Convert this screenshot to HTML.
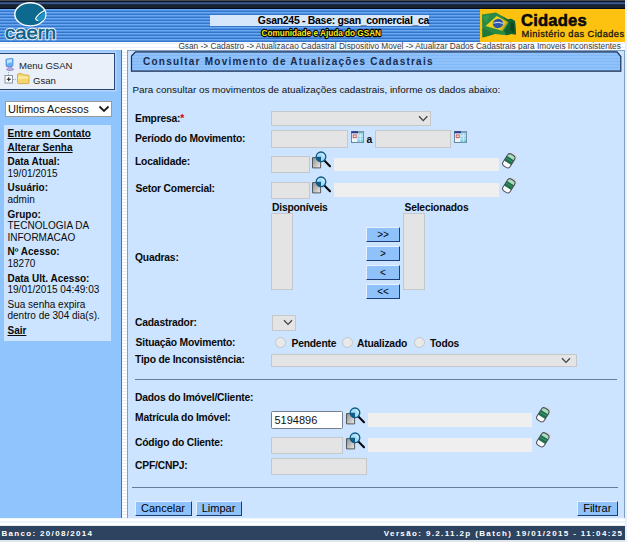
<!DOCTYPE html>
<html>
<head>
<meta charset="utf-8">
<title>GSAN</title>
<style>
*{box-sizing:border-box;margin:0;padding:0}
html,body{width:627px;height:542px;overflow:hidden;background:#fff;font-family:"Liberation Sans",sans-serif;font-size:11px;color:#111}
.abs{position:absolute}
#hdr{left:0;top:0;width:627px;height:41.6px;background:repeating-linear-gradient(to bottom,#69a8f2 0,#69a8f2 1px,#4f8fe0 1px,#4f8fe0 2px,#3474c9 2px,#3474c9 3px);}
#hdrtop{left:0;top:0;width:627px;height:9px;background:linear-gradient(to bottom,#4a4c50 0,#4a4c50 1px,#0a1428 1px,#0a1428 2px,#2d4a78 2px,#2d4a78 3px,#3a5a8c 3px,#3a5a8c 4px,#1c2c44 4px,#1c2c44 5px,#18222f 5px,#18222f 8px,#020c24 8px,#020c24 9px)}
#subhdr{left:0;top:41.6px;width:627px;height:9px;background:linear-gradient(to bottom,#fff 0,#e6effb 1.4px,#fff 2.5px,#fff 4.5px,#e8f0fb 5.5px,#fff 6.5px,#fff 9px)}
#side{left:0;top:50.4px;width:122px;height:468px;background:#90c4fc;border-right:1px solid #4674ae}
#dots{left:122px;top:50.4px;width:4.5px;height:468.4px;background:repeating-linear-gradient(to bottom,#fff 0,#fff 2px,#e3ecf7 2px,#e3ecf7 3px)}
#main{left:126.5px;top:50.4px;width:498.5px;height:468.6px;background:#cce4ff;border:1px solid #7f9fc4}
#foot{left:0;top:526.4px;width:625.6px;height:14px;background:#2e4360}
.ft{color:#fff;font-weight:bold;font-size:8px;letter-spacing:1.37px;line-height:14px;white-space:nowrap}
.b{font-weight:bold}
.t{white-space:nowrap;line-height:12px}
.inp{background:#e4e4e4;border:1px solid #c4c8cc}
.ro{background:#efefef}
.btn{background:#8fc2fb;border:1px solid;border-color:#e6f1ff #1e3c78 #1e3c78 #e6f1ff;font-size:11px;text-align:center;line-height:13.5px;color:#000}

.sb{left:7.5px;font-size:10px;line-height:12px;white-space:nowrap;color:#0a0a0a}
.u{text-decoration:underline}

.lb{left:135px;font-size:10.3px;letter-spacing:-0.2px;font-weight:bold;line-height:12px;white-space:nowrap;color:#0a0a0a}
.qb{left:366px;width:34px;height:15.5px;font-size:10px;line-height:13px}
.rd{width:11px;height:11px;border-radius:50%;background:#e9e9e9;border:1px solid #c2c6ca}
</style>
</head>
<body>
<div class="abs" id="hdr"></div>
<div class="abs" id="hdrtop"></div>
<div class="abs" id="subhdr"></div>

<!-- header content -->
<svg class="abs" style="left:0;top:0" width="70" height="44" viewBox="0 0 70 44">
  <ellipse cx="30.3" cy="14.3" rx="15.5" ry="11.6" fill="#0d6a8e" stroke="#fff" stroke-width="1.4"/>
  <path d="M45 11.5 Q46.2 15.5 44.2 19.3 Q41 22.6 36.8 20.4 Q35.2 19.5 36 18.2 Z" fill="#1f8fc4"/>
  <path d="M44.6 10.6 Q38 14 35.6 18.6 Q36 20.4 38.2 20.6" fill="none" stroke="#fff" stroke-width="1.1"/>
  <text x="5" y="38.8" font-family="Liberation Sans, sans-serif" font-size="18.6" fill="#f2f7fd" stroke="#f2f7fd" stroke-width="2.3" stroke-linejoin="round" textLength="51" lengthAdjust="spacingAndGlyphs">caern</text>
  <text x="5" y="38.8" font-family="Liberation Sans, sans-serif" font-size="18.6" fill="#0d5f88" stroke="#0d5f88" stroke-width="0.5" textLength="51" lengthAdjust="spacingAndGlyphs">caern</text>
</svg>
<div class="abs" style="left:210px;top:15px;width:219px;height:11px;background:#d6e7fc"></div>
<div class="abs t b" id="ttl" style="left:257.8px;top:14px;font-size:10.5px;letter-spacing:-0.31px;line-height:13px;color:#000">Gsan245 - Base: gsan_comercial_ca</div>
<svg class="abs" style="left:250px;top:25px" width="140" height="16" viewBox="0 0 140 16">
  <text x="11.5" y="11" font-family="Liberation Sans, sans-serif" font-size="9.5" font-weight="bold" fill="#ffe81a" stroke="#000" stroke-width="2.4" stroke-linejoin="round" paint-order="stroke" textLength="119.5" lengthAdjust="spacingAndGlyphs">Comunidade e Ajuda do GSAN</text>
</svg>
<div class="abs" style="left:479.7px;top:9px;width:146px;height:32.6px;background:#fdc20f"></div><div class="abs" style="left:625.3px;top:0;width:2px;height:542px;background:#e9f0f9;z-index:5"></div>
<svg class="abs" style="left:480px;top:10px" width="40" height="30" viewBox="0 0 40 30">
  <path d="M2 4.5 L9 3.6 L16 2.6 L22 6 L28 9.4 L31 8.8 L35 11 L35.5 17 L36 24.6 L31 24 L26.5 25.2 L20 24.4 L14.5 24 L8 26 L2.5 27.6 L2.2 16 Z" fill="#2a8a43"/>
  <path d="M22 6 L28 9.4 L31 8.8 L35 11 L35.5 17 L36 24.6 L31 24 L26.5 25.2 L24 21 L29 13Z" fill="#14602f"/>
  <path d="M31 12 L34 14 L34.5 23 L30 20Z" fill="#0c4422" opacity=".8"/>
  <path d="M2.3 18 L9 21 L14.5 24 L8 26 L2.5 27.6Z" fill="#1f7838"/>
  <path d="M2.5 6 L10 5 L6 13Z" fill="#3da055" opacity=".7"/>
  <path d="M5.6 16 L16.7 6 L27.9 12 L22.3 20.7 Z" fill="#f2d21e"/>
  <path d="M22.5 9.2 L27.9 12 L22.3 20.7 L20.5 19.8 L25.3 12.5Z" fill="#b79a18" opacity=".65"/>
  <ellipse cx="18" cy="13.5" rx="5.3" ry="4.6" fill="#2e55a8" transform="rotate(-12 18 13.5)"/>
  <path d="M13.2 13.2 Q18 11.4 23.2 13.4" fill="none" stroke="#dfe6f2" stroke-width="1"/>
</svg>
<div class="abs t b" id="cid" style="left:521px;top:10.1px;font-size:16.6px;line-height:22px;color:#0a0a0a;letter-spacing:0.2px;-webkit-text-stroke:.55px #0a0a0a">Cidades</div>
<div class="abs t" id="min" style="left:521.6px;top:27.8px;font-size:9.3px;line-height:13px;color:#161616;letter-spacing:0.4px;-webkit-text-stroke:.3px #161616">Ministério das Cidades</div>
<div class="abs t" id="crumb" style="left:178.4px;top:40.5px;font-size:8.3px;line-height:10px;color:#3a3a3a">Gsan -&gt; Cadastro -&gt; Atualizacao Cadastral Dispositivo Movel -&gt; Atualizar Dados Cadastrais para Imoveis Inconsistentes</div>
<div class="abs" id="side"></div>

<!-- sidebar -->
<div class="abs" style="left:-2px;top:52.6px;width:117.4px;height:37.4px;background:#e9f0fa;border:1.5px solid #2a4674;box-shadow:0 0 0 1.5px #b4d3f9"></div>
<svg class="abs" style="left:3.5px;top:58px" width="12" height="13.5" viewBox="0 0 14 16">
  <path d="M3.2 1.2 L9.6 0.6 Q10.6 0.6 10.6 1.6 L10.4 9 Q10.4 10 9.4 10 L3.4 10.2 Q2.4 10.2 2.4 9.2 L2.2 2.2 Q2.2 1.3 3.2 1.2Z" fill="#62b2f5" stroke="#3a78d0" stroke-width=".8"/>
  <path d="M3.4 2 L9.4 1.6 L9.3 5.5 Q6 5 3.5 7Z" fill="#c4e6fd"/>
  <path d="M5 10.4 L8.6 10.2 L9.6 12.4 Q11.6 12.8 11.4 13.8 Q9 15.4 5 14.8 Q2.6 14.2 3 13 Q3.6 12.4 4.8 12.4Z" fill="#b4aae2" stroke="#7a70b8" stroke-width=".6"/>
</svg>
<div class="abs t" id="mg" style="left:19px;top:59px;font-size:9.6px;line-height:13px;color:#222;letter-spacing:-.05px">Menu GSAN</div>
<svg class="abs" style="left:4px;top:70px" width="28" height="16" viewBox="0 0 28 16">
  <path d="M4.5 0 V5 M9 9.5 H13" stroke="#8a9ab0" stroke-width=".8" stroke-dasharray="1 1"/>
  <rect x="1" y="5.5" width="7.5" height="7.5" fill="#fff" stroke="#7d8a9c" stroke-width=".9"/>
  <path d="M2.8 9.25 H6.8 M4.75 7.3 V11.2" stroke="#111" stroke-width="1"/>
  <path d="M13.5 5 Q13.5 3.6 14.8 3.6 L17.6 3.6 Q18.4 3.6 18.8 4.4 L19.2 5 L24 5 Q25 5 25 6 V12.6 Q25 13.6 24 13.6 H14.6 Q13.5 13.6 13.5 12.6Z" fill="#f6d66a" stroke="#c9a23a" stroke-width=".8"/>
  <path d="M14.2 6.2 H24.3 V9 Q19 8 14.2 9.4Z" fill="#fbe9a6"/>
</svg>
<div class="abs t" id="gs" style="left:33px;top:73.5px;font-size:9.6px;line-height:13px;color:#222;letter-spacing:0px">Gsan</div>

<div class="abs" style="left:5px;top:101px;width:107px;height:16px;background:#fff;border:1px solid #9a9a9a"></div>
<div class="abs t" id="ua" style="left:8px;top:102px;font-size:11px;line-height:14px;color:#111">Ultimos Acessos</div>
<svg class="abs" style="left:98px;top:104px" width="12" height="10" viewBox="0 0 12 10"><path d="M1.5 2.5 L6 7 L10.5 2.5" fill="none" stroke="#1a1a1a" stroke-width="1.8"/></svg>

<div class="abs" style="left:4px;top:124.5px;width:107px;height:216.5px;background:#cce4ff"></div>
<div class="abs sb b u" id="s1" style="top:127.7px">Entre em Contato</div>
<div class="abs sb b u" id="s2" style="top:142.2px">Alterar Senha</div>
<div class="abs sb b" id="s3" style="top:156.2px">Data Atual:</div>
<div class="abs sb" id="s4" style="top:167.7px">19/01/2015</div>
<div class="abs sb b" id="s5" style="top:182.2px">Usuário:</div>
<div class="abs sb" id="s6" style="top:194.2px">admin</div>
<div class="abs sb b" id="s7" style="top:209.2px">Grupo:</div>
<div class="abs sb" id="s8" style="top:220.2px">TECNOLOGIA DA</div>
<div class="abs sb" id="s9" style="top:231.7px">INFORMACAO</div>
<div class="abs sb b" id="s10" style="top:246.2px">Nº Acesso:</div>
<div class="abs sb" id="s11" style="top:257.7px">18270</div>
<div class="abs sb b" id="s12" style="top:273.2px">Data Ult. Acesso:</div>
<div class="abs sb" id="s13" style="top:284.2px">19/01/2015 04:49:03</div>
<div class="abs sb" id="s14" style="top:298.7px">Sua senha expira</div>
<div class="abs sb" id="s15" style="top:310.2px">dentro de 304 dia(s).</div>
<div class="abs sb b u" id="s16" style="top:324.7px">Sair</div>
<div class="abs" id="dots"></div>
<div class="abs" id="main"></div>

<!-- main content -->
<svg width="0" height="0" style="position:absolute"><symbol id="mag" viewBox="0 0 19 18">
  <defs><linearGradient id="dg" x1="0" y1="0" x2="1" y2="1"><stop offset="0" stop-color="#8e8e8e"/><stop offset="1" stop-color="#ececec"/></linearGradient></defs>
  <path d="M0.5 6.6 H8.6 V16.9 H0.5Z" fill="url(#dg)" stroke="#4a4a4a" stroke-width=".9"/>
  <path d="M12.6 9.8 L18 15.2" stroke="#0a0a0a" stroke-width="2.1" stroke-linecap="round"/>
  <circle cx="9" cy="5.8" r="4.8" fill="#a9ddf5"/>
  <path d="M9 5.8 L4.2 5.8 A4.8 4.8 0 0 0 9 10.6Z" fill="#115e8a"/>
  <circle cx="9" cy="5.8" r="4.8" fill="none" stroke="#0f5a84" stroke-width="1.3"/>
  <path d="M9.8 3 Q11.8 3.6 12 5.6" stroke="#e8f8ff" stroke-width=".9" fill="none"/>
</symbol><symbol id="era" viewBox="0 0 16 17">
  <g transform="translate(7.8 8.8) rotate(32)">
    <rect x="-2.4" y="-9.2" width="8.2" height="8" rx="2.6" fill="#d8d2dc" opacity=".55"/>
    <rect x="-4.2" y="-7" width="8.4" height="14" rx="3" fill="#fafafa"/>
    <path d="M-4.2 -4.4 Q-4.2 -7 -1.6 -7 H1.6 Q4.2 -7 4.2 -4.4 V-3.2 H-4.2Z" fill="#a6dfc0"/>
    <path d="M-4.2 -3.2 H4.2 V2.2 H-4.2Z" fill="#1f6f4a"/>
    <path d="M-4.2 -1.4 H4.2 V-0.4 H-4.2Z" fill="#3a9a6c"/>
    <rect x="-4.2" y="-7" width="8.4" height="14" rx="3" fill="none" stroke="#4c4c50" stroke-width="1"/>
  </g>
</symbol><symbol id="cal" viewBox="0 0 13 12">
  <defs><linearGradient id="cg" x1="0" y1="0" x2="0" y2="1"><stop offset="0" stop-color="#b4e2f2"/><stop offset="1" stop-color="#74c8e2"/></linearGradient></defs>
  <rect x=".5" y=".5" width="12" height="11" fill="#f2f7fc" stroke="#6a889c" stroke-width="1"/>
  <rect x="6.3" y="2" width="5.8" height="9.2" fill="url(#cg)"/>
  <rect x=".4" y=".3" width="6.8" height="2" fill="#2a3a92"/>
  <rect x="7.2" y=".3" width="5.4" height="2" fill="#86a6b8"/>
  <path d="M9.3 2.3 V11 M6.3 5 H12 M6.3 8 H12 M.9 8 H6.3 M3.6 8 V11" stroke="#e4f4fa" stroke-width=".7"/>
  <rect x="2.2" y="3.9" width="3" height="2.8" fill="#fbeaea" stroke="#c24a4a" stroke-width=".9"/>
</symbol><symbol id="chev" viewBox="0 0 10 7"><path d="M1 1.2 L5 5.4 L9 1.2" fill="none" stroke="#444" stroke-width="1.3"/></symbol></svg>
<svg class="abs" style="left:130px;top:50px" width="494" height="24" viewBox="0 0 494 24">
  <defs><pattern id="tst" width="4" height="3" patternUnits="userSpaceOnUse"><rect width="4" height="3" fill="#8fc2fb"/><rect y="2" width="4" height="1" fill="#82b8f6"/></pattern></defs>
  <path d="M1.5 6 L5.5 1.8 L487 1.8 L490.8 6.5 L490.8 21.2 L1.5 21.2Z" fill="url(#tst)" stroke="#1b2f52" stroke-width="1.2"/>
</svg>
<div class="abs t b" id="tt" style="left:143px;top:54.7px;font-size:10px;line-height:14px;letter-spacing:1.23px;color:#1a2c4e">Consultar Movimento de Atualizações Cadastrais</div>
<div class="abs t" id="intro" style="left:132.5px;top:84px;font-size:9.9px;line-height:12px;color:#111">Para consultar os movimentos de atualizações cadastrais, informe os dados abaixo:</div>

<div class="abs lb" id="l1" style="top:113.4px">Empresa:<span style="color:#e00000">*</span></div>
<div class="abs lb" id="l2" style="top:133px">Período do Movimento:</div>
<div class="abs lb" id="l3" style="top:155.5px">Localidade:</div>
<div class="abs lb" id="l4" style="top:182.5px;left:135.6px">Setor Comercial:</div>
<div class="abs lb" id="l5" style="top:251.5px">Quadras:</div>
<div class="abs lb" id="l6" style="top:317px">Cadastrador:</div>
<div class="abs lb" id="l7" style="top:336.5px;left:135.6px">Situação Movimento:</div>
<div class="abs lb" id="l8" style="top:354px">Tipo de Inconsistência:</div>
<div class="abs lb" id="l9" style="top:391.5px">Dados do Imóvel/Cliente:</div>
<div class="abs lb" id="l10" style="top:412px">Matrícula do Imóvel:</div>
<div class="abs lb" id="l11" style="top:437px">Código do Cliente:</div>
<div class="abs lb" id="l12" style="top:460px">CPF/CNPJ:</div>

<div class="abs inp" style="left:271px;top:111px;width:159.5px;height:15.2px"></div>
<svg class="abs" style="left:417.6px;top:114.8px" width="10.4" height="7.3"><use href="#chev"/></svg>
<div class="abs inp" style="left:271px;top:130px;width:77px;height:17.5px"></div>
<svg class="abs" style="left:351px;top:130.7px" width="13" height="12"><use href="#cal"/></svg>
<div class="abs lb" id="la" style="left:366.5px;top:133.5px">a</div>
<div class="abs inp" style="left:374.5px;top:130px;width:76px;height:17.5px"></div>
<svg class="abs" style="left:454.2px;top:130.7px" width="13" height="12"><use href="#cal"/></svg>

<div class="abs inp" style="left:271px;top:155.5px;width:38.5px;height:17px"></div>
<svg class="abs" style="left:312px;top:151px" width="19" height="18"><use href="#mag"/></svg>
<div class="abs ro" style="left:333.5px;top:157.5px;width:165px;height:13.5px"></div>
<svg class="abs" style="left:501px;top:151.5px" width="16" height="17"><use href="#era"/></svg>

<div class="abs inp" style="left:271px;top:181.5px;width:38.5px;height:17px"></div>
<svg class="abs" style="left:312px;top:175.5px" width="19" height="18"><use href="#mag"/></svg>
<div class="abs ro" style="left:333.5px;top:183px;width:165px;height:13.5px"></div>
<svg class="abs" style="left:501px;top:176.5px" width="16" height="17"><use href="#era"/></svg>

<div class="abs lb" id="ld" style="left:272px;top:201.5px">Disponíveis</div>
<div class="abs lb" id="ls" style="left:404.5px;top:201.5px">Selecionados</div>
<div class="abs inp" style="left:271px;top:213px;width:22px;height:77px"></div>
<div class="abs inp" style="left:403px;top:213px;width:22px;height:77px"></div>
<div class="abs btn qb" style="top:226.5px">&gt;&gt;</div>
<div class="abs btn qb" style="top:245.5px">&gt;</div>
<div class="abs btn qb" style="top:264.5px">&lt;</div>
<div class="abs btn qb" style="top:283.5px">&lt;&lt;</div>

<div class="abs inp" style="left:271.5px;top:315px;width:24px;height:15.5px"></div>
<svg class="abs" style="left:282.5px;top:319.3px" width="10" height="7"><use href="#chev"/></svg>
<div class="abs rd" style="left:274.5px;top:336.5px"></div>
<div class="abs rd" style="left:341.5px;top:336.5px"></div>
<div class="abs rd" style="left:414px;top:336.5px"></div>
<div class="abs lb" id="r1" style="left:291.5px;top:337.5px">Pendente</div>
<div class="abs lb" id="r2" style="left:357px;top:337.5px">Atualizado</div>
<div class="abs lb" id="r3" style="left:430px;top:337.5px">Todos</div>
<div class="abs inp" style="left:271px;top:353.5px;width:305.5px;height:13.5px"></div>
<svg class="abs" style="left:561px;top:356.7px" width="10" height="7"><use href="#chev"/></svg>

<div class="abs" style="left:134.5px;top:379px;width:482px;height:1px;background:#6a7d94"></div>

<div class="abs" style="left:271px;top:411px;width:72px;height:18px;background:#fff;border:1px solid #75808e;border-radius:1.5px"></div>
<div class="abs t" id="mat" style="left:274.5px;top:413px;font-size:11px;line-height:14px;color:#111">5194896</div>
<svg class="abs" style="left:346px;top:407px" width="19" height="18"><use href="#mag"/></svg>
<div class="abs ro" style="left:368px;top:413px;width:164px;height:13.7px"></div>
<svg class="abs" style="left:534.8px;top:405.7px" width="16" height="17"><use href="#era"/></svg>

<div class="abs inp" style="left:271px;top:437px;width:72px;height:17px"></div>
<svg class="abs" style="left:346px;top:432px" width="19" height="18"><use href="#mag"/></svg>
<div class="abs ro" style="left:368px;top:438.2px;width:164px;height:14px"></div>
<svg class="abs" style="left:534.8px;top:430.6px" width="16" height="17"><use href="#era"/></svg>

<div class="abs inp" style="left:271px;top:458px;width:96px;height:17px"></div>

<div class="abs" style="left:132px;top:487px;width:486px;height:1px;background:#6a7d94"></div>
<div class="abs btn" id="b1" style="left:134.5px;top:501px;width:57px;height:15px">Cancelar</div>
<div class="abs btn" id="b2" style="left:195.5px;top:501px;width:46px;height:15px">Limpar</div>
<div class="abs btn" id="b3" style="left:576.5px;top:501px;width:41.5px;height:15px">Filtrar</div>
<div class="abs" style="left:0;top:518.4px;width:627px;height:8px;background:linear-gradient(to bottom,#eaf2fc 0,#fff 1.5px,#fff 3px,#dfeafa 4px,#fff 5.2px,#fff 7px,#cfd8e4 8px)"></div>
<div class="abs" id="foot"></div>
<div class="abs" style="left:0;top:540px;width:627px;height:2px;background:#dfe6ee"></div>
<div class="abs ft" id="f1" style="left:1.4px;top:527px;letter-spacing:1.33px">Banco: 20/08/2014</div>
<div class="abs ft" id="f2" style="right:3.6px;top:527px">Versão: 9.2.11.2p (Batch) 19/01/2015 - 11:04:25</div>
</body>
</html>
